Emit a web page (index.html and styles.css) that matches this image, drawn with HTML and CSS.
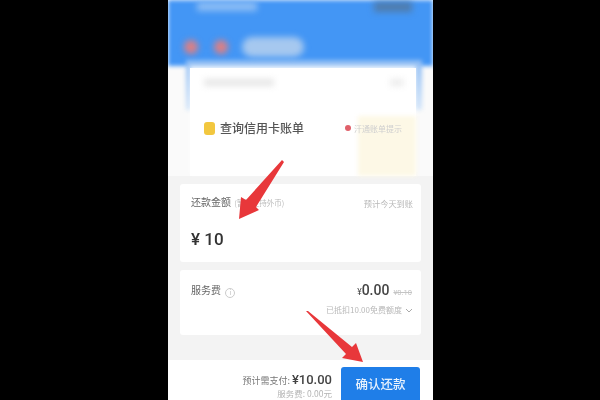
FILE: index.html
```html
<!DOCTYPE html>
<html lang="zh">
<head>
<meta charset="utf-8">
<title>还款</title>
<link rel="stylesheet" href="styles.css">
</head>
<body>
<main class="phone">
  <section class="hero">
    <div class="hero-bg"></div>
    <div class="hero-top">
      <span class="status-l"></span>
      <span class="status-r"></span>
    </div>
    <div class="hero-row">
      <span class="dot"></span>
      <span class="dot"></span>
      <span class="pill"></span>
    </div>
    <div class="bill-card">
      <div class="bill-head"><span class="bh-a"></span><span class="bh-b"></span></div>
      <div class="bill-row">
        <span class="coin"></span>
        <span class="bill-title">查询信用卡账单</span>
        <span class="reddot"></span>
        <span class="bill-note">汗通账单提示</span>
      </div>
      <div class="stamp"></div>
    </div>
  </section>

  <section class="card amount">
    <div class="row">
      <div class="label">还款金额 <small>(暂不支持外币)</small></div>
      <div class="hint">预计今天到账</div>
    </div>
    <div class="money">¥ 10</div>
  </section>

  <section class="card fee">
    <div class="row">
      <div class="label">服务费 <span class="info">i</span></div>
      <div class="fee-val"><small>¥</small><b>0.00</b><s>¥0.10</s></div>
    </div>
    <div class="discount">已抵扣10.00免费额度 <svg class="chev" viewBox="0 0 8 5"><path d="M1 1l3 3 3-3" fill="none" stroke="#aaa" stroke-width="1"/></svg></div>
  </section>

  <footer class="bar">
    <div class="sum">
      <div class="sum-main">预计需支付: <b>¥10.00</b></div>
      <div class="sum-sub">服务费: 0.00元</div>
    </div>
    <button class="confirm">确认还款</button>
  </footer>

  <svg class="arrow arrow-a" viewBox="0 0 52 62"><path d="M47 2 L49 4 L21 49 L24 52 L4 61 L6 39 L11 42 Z" fill="#e8373a"/></svg>
  <svg class="arrow arrow-b" viewBox="0 0 63 57"><path d="M3 3 L5 3 L49 39 L53 35 L60 54 L39 50 L43 46 Z" fill="#e8373a"/></svg>
</main>
</body>
</html>
```
FILE: styles.css
```css
* { box-sizing: border-box; }
html, body { margin: 0; height: 100%; background: #000; overflow: hidden; }
body { display: flex; justify-content: center; font-family: "Noto Sans CJK SC", "Liberation Sans", sans-serif; }
.phone { position: relative; width: 265px; height: 400px; margin-left: 1px; background: #f3f3f3; display: flex; flex-direction: column; overflow: hidden; filter: blur(0.45px); }

.hero { position: relative; flex: none; height: 176px; margin-bottom: 8px; background: #fafafa; padding: 0 17px 0 22px; }
.hero-bg { position: absolute; inset: 0 0 auto 0; height: 66px; background: #4396f5; filter: blur(2px); }
.hero-bg::after { content: ""; position: absolute; top: 60px; left: 18px; right: 11px; height: 50px; background: linear-gradient(#8fbdf4, #d5e6f9); }
.hero-top, .hero-row, .bill-card { position: relative; }
.hero-top { height: 36px; display: flex; justify-content: space-between; align-items: flex-start; padding: 2px 0 0 7px; filter: blur(3px); }
.status-l { width: 60px; height: 9px; background: #8cbdf5; }
.status-r { width: 38px; height: 10px; margin-right: 4px; background: #4f7cad; }
.hero-row { height: 22px; display: flex; align-items: center; gap: 16px; margin-left: -6px; filter: blur(3px); }
.dot { width: 14px; height: 14px; border-radius: 50%; background: #dd7f83; }
.pill { width: 62px; height: 20px; margin-left: -2px; border-radius: 10px; background: #a6c8ef; }
.bill-card { height: 108px; margin-top: 10px; background: #fff; box-shadow: 0 -2px 4px rgba(255,255,255,.8); }
.bill-head { display: flex; justify-content: space-between; padding: 11px 12px 0 14px; filter: blur(3px); }
.bh-a { width: 70px; height: 7px; background: #e6e6e6; }
.bh-b { width: 14px; height: 7px; background: #ececec; }
.bill-row { position: relative; z-index: 1; display: flex; align-items: center; margin: 34px 0 0 14px; }
.coin { width: 11px; height: 13px; border-radius: 3px; background: #f2c73f; }
.bill-title { margin-left: 5px; font-size: 12px; line-height: 16px; font-weight: 500; color: #555; white-space: nowrap; }
.reddot { width: 6px; height: 6px; margin-left: 41px; border-radius: 50%; background: #e0606a; }
.bill-note { margin-left: 3px; font-size: 8px; color: #cfcfcf; white-space: nowrap; filter: blur(.6px); }
.stamp { position: absolute; right: 0; bottom: 0; width: 58px; height: 60px; background: #fdf8e6; filter: blur(2px); }

.card { flex: none; margin: 0 12px 8px; background: #fff; border-radius: 3px; padding: 11px 8px 0 11px; }
.amount { height: 78px; }
.fee { height: 65px; }
.row { display: flex; justify-content: space-between; align-items: center; }
.label { font-size: 10px; line-height: 14px; color: #666; white-space: nowrap; }
.label small { font-size: 7.5px; color: #bbb; margin-left: 1px; }
.hint { font-size: 8.2px; color: #b8b8b8; }
.money { margin-top: 19px; font: 500 17px/20px "Roboto", "Liberation Sans", sans-serif; color: #333; }
.fee { padding-top: 12px; }
.info { display: inline-flex; width: 10px; height: 10px; margin-left: 2px; align-items: center; justify-content: center; border: 1px solid #ccc; border-radius: 50%; font-size: 6px; line-height: 1; color: #bbb; vertical-align: -1px; }
.fee-val { display: flex; align-items: baseline; margin-right: 1px; color: #444; font-family: "Roboto", "Liberation Sans", sans-serif; }
.fee-val small { font-size: 8.5px; }
.fee-val b { font-size: 14px; font-weight: 500; }
.fee-val s { margin-left: 4px; font-size: 7.5px; color: #c4c4c4; }
.discount { display: flex; justify-content: flex-end; align-items: center; gap: 3px; margin-top: 7px; font-size: 8px; line-height: 10px; color: #b8b8b8; }
.chev { width: 8px; height: 5px; }

.bar { flex: 1; margin-top: 17px; background: #fff; display: flex; justify-content: flex-end; gap: 9px; padding: 7px 13px 0 0; }
.sum { text-align: right; padding-top: 6px; }
.sum-main { font-size: 9px; line-height: 14px; color: #777; white-space: nowrap; }
.sum-main b { font: 500 13px/14px "Roboto", "Liberation Sans", sans-serif; color: #444; }
.sum-sub { font-size: 8.5px; line-height: 11px; color: #b4b4b4; white-space: nowrap; }
.confirm { width: 79px; height: 33px; padding: 0; border: 0; border-radius: 3px 3px 0 0; background: #1f7ee8; color: #e8f2fd; font: 500 12.5px "Noto Sans CJK SC", sans-serif; }

.arrow { position: absolute; }
.arrow-a { left: 67px; top: 158px; width: 52px; height: 62px; }
.arrow-b { left: 135px; top: 308px; width: 63px; height: 57px; }
```
